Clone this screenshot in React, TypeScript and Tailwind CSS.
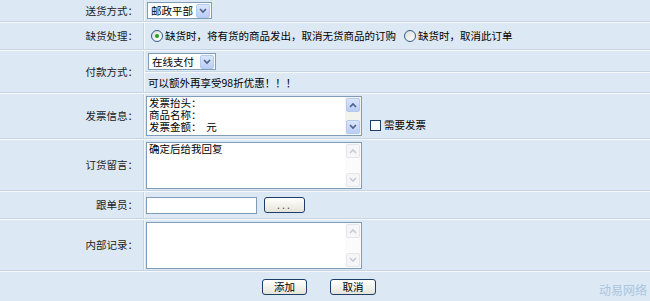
import React from "react";

const FONT = {
  fontFamily: '"SimSun", "Noto Sans CJK SC", "Liberation Sans", sans-serif',
};

function Sep() {
  return (
    <div className="flex flex-col">
      <div className="h-[1px] bg-[#c7d5e3]" />
      <div className="h-[1px] bg-[#f6f9fc]" />
    </div>
  );
}

function Row({
  label,
  h,
  children,
}: {
  label: string;
  h: string;
  children: React.ReactNode;
}) {
  return (
    <div className={`flex ${h}`}>
      <div className="flex w-[143px] items-center justify-end pr-[5px] text-[10.5px] text-[#222]">
        {label}
      </div>
      <div className="w-[1px] bg-[#c7d5e3]" />
      <div className="w-[1px] bg-[#f6f9fc]" />
      <div className="flex min-w-0 flex-1 items-center">{children}</div>
    </div>
  );
}

function Arrow({ up = false, disabled = false }: { up?: boolean; disabled?: boolean }) {
  return (
    <div
      className={`flex h-[14px] w-[14px] shrink-0 items-center justify-center rounded-[2px] border ${
        disabled
          ? "border-[#e4e6ec] bg-[#f6f6f8]"
          : "border-[#b6c9ee] bg-gradient-to-b from-[#dbe6fd] to-[#b9cdf6]"
      }`}
    >
      <svg width="8" height="6" viewBox="0 0 8 6">
        <path
          d={up ? "M1 5 L4 2 L7 5" : "M1 1 L4 4 L7 1"}
          fill="none"
          stroke={disabled ? "#c8cbd4" : "#4d6185"}
          strokeWidth="1.6"
        />
      </svg>
    </div>
  );
}

function Select({ text, w }: { text: string; w: string }) {
  return (
    <div
      className={`flex h-[17px] ${w} items-center justify-between border border-[#7f9db9] bg-white pl-[3px] pr-[1px] text-[10.5px] text-black`}
    >
      <span className="whitespace-nowrap">{text}</span>
      <Arrow />
    </div>
  );
}

function Area({
  text,
  h,
  disabled = false,
}: {
  text: string;
  h: string;
  disabled?: boolean;
}) {
  return (
    <div className={`flex ${h} w-[216px] border border-[#7f9db9] bg-white`}>
      <div className="flex-1 whitespace-pre px-[2px] text-[10.5px] leading-[12px] text-black">
        {text}
      </div>
      <div
        className={`flex w-[16px] flex-col justify-between p-[1px] ${
          disabled ? "bg-[#fbfbfc]" : "bg-[#f4f4ef]"
        }`}
      >
        <Arrow up disabled={disabled} />
        <Arrow disabled={disabled} />
      </div>
    </div>
  );
}

function Radio({ on = false }: { on?: boolean }) {
  return (
    <span className="mr-[2px] inline-flex h-[12px] w-[12px] items-center justify-center rounded-full border border-[#2f5a8c] bg-gradient-to-br from-[#dcdcd6] to-white">
      {on && <span className="h-[4px] w-[4px] rounded-full bg-[#21a121]" />}
    </span>
  );
}

function Btn({ children, w }: { children: React.ReactNode; w: string }) {
  return (
    <div
      className={`flex h-[16px] ${w} items-center justify-center rounded-[3px] border border-[#1c3e68] bg-gradient-to-b from-white to-[#e6e4d8] text-[10.5px] text-black`}
    >
      {children}
    </div>
  );
}

export default function App() {
  return (
    <div
      className="relative h-[301px] w-[650px] overflow-hidden bg-[#dce8f4]"
      style={FONT}
    >
      <Row label="送货方式：" h="h-[21px]">
        <div className="pl-[2px]">
          <Select text="邮政平部" w="w-[65px]" />
        </div>
      </Row>
      <Sep />
      <Row label="缺货处理：" h="h-[26px]">
        <div className="flex items-center pl-[6px] text-[10.5px] text-black">
          <Radio on />
          <span>缺货时，将有货的商品发出，取消无货商品的订购</span>
          <span className="ml-[8px]" />
          <Radio />
          <span>缺货时，取消此订单</span>
        </div>
      </Row>
      <Sep />
      <Row label="付款方式：" h="h-[41px]">
        <div className="flex h-full flex-1 flex-col">
          <div className="flex h-[19px] items-end pl-[3px]">
            <Select text="在线支付" w="w-[68px]" />
          </div>
          <div className="mt-[1px] h-[1px] bg-[#c7d5e3]" />
          <div className="h-[1px] bg-[#f6f9fc]" />
          <div className="flex flex-1 items-center pl-[3px] text-[10.5px] text-black">
            可以额外再享受98折优惠！！！
          </div>
        </div>
      </Row>
      <Sep />
      <Row label="发票信息：" h="h-[44px]">
        <div className="flex items-end pl-[1px]">
          <Area h="h-[40px]" text={"发票抬头：\n商品名称：\n发票金额：  元"} />
          <div className="mb-[3px] ml-[8px] flex items-center text-[10.5px] text-black">
            <span className="mr-[3px] h-[11px] w-[11px] border border-[#1c3e68] bg-white" />
            需要发票
          </div>
        </div>
      </Row>
      <Sep />
      <Row label="订货留言：" h="h-[50px]">
        <div className="pl-[1px]">
          <Area h="h-[47px]" text="确定后给我回复" disabled />
        </div>
      </Row>
      <Sep />
      <Row label="跟单员：" h="h-[26px]">
        <div className="flex items-center pl-[1px]">
          <div className="h-[17px] w-[111px] border border-[#7f9db9] bg-white" />
          <div className="ml-[7px]">
            <Btn w="w-[41px]">
              <span className="tracking-[2px] text-[#555]">...</span>
            </Btn>
          </div>
        </div>
      </Row>
      <Sep />
      <Row label="内部记录：" h="h-[50px]">
        <div className="pl-[1px]">
          <Area h="h-[47px]" text="" disabled />
        </div>
      </Row>
      <Sep />
      <div className="flex h-[29px] items-center pl-[262px]">
        <Btn w="w-[45px]">添加</Btn>
        <div className="ml-[23px]">
          <Btn w="w-[46px]">取消</Btn>
        </div>
      </div>
      <div className="absolute bottom-[2px] right-[3px] text-[12px] text-[#a9c6df]">
        动易网络
      </div>
    </div>
  );
}
